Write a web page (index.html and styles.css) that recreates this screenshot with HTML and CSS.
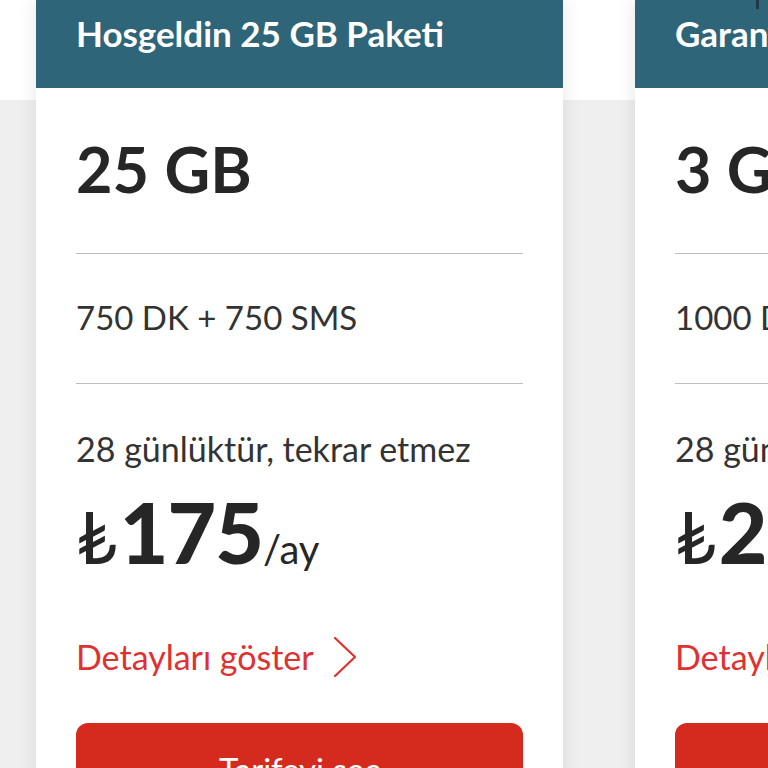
FILE: index.html
```html
<!DOCTYPE html>
<html lang="tr">
<head>
<meta charset="utf-8">
<link rel="stylesheet" href="styles.css">
</head>
<body>
<div class="page">
  <div class="band"></div>
  <div class="row">
    <div class="card">
      <div class="card-head"><span class="title">Hosgeldin 25 GB Paketi</span></div>
      <div class="card-body">
        <div class="data">25 GB</div>
        <div class="divider"></div>
        <div class="minutes">750 DK + 750 SMS</div>
        <div class="divider"></div>
        <div class="period">28 günlüktür, tekrar etmez</div>
        <div class="price"><span class="cur">₺</span><span class="amount">175</span><span class="per">/ay</span></div>
        <a class="details">Detayları göster
          <svg class="chev" viewBox="0 0 28 44" width="28" height="44"><path d="M4 3 L24 22 L4 41" fill="none" stroke="#e03131" stroke-width="2.2" stroke-linecap="round" stroke-linejoin="round"/></svg>
        </a>
        <div class="btn">Tarifeyi seç</div>
      </div>
    </div>
    <div class="card">
      <div class="card-head"><span class="title">Garanti 3 GB Paketi</span><span class="mark"></span></div>
      <div class="card-body">
        <div class="data">3 GB</div>
        <div class="divider"></div>
        <div class="minutes">1000 DK + 1000 SMS</div>
        <div class="divider"></div>
        <div class="period">28 günlüktür, tekrar etmez</div>
        <div class="price"><span class="cur">₺</span><span class="amount">200</span><span class="per">/ay</span></div>
        <a class="details">Detayları göster
          <svg class="chev" viewBox="0 0 28 44" width="28" height="44"><path d="M4 3 L24 22 L4 41" fill="none" stroke="#e03131" stroke-width="2.2" stroke-linecap="round" stroke-linejoin="round"/></svg>
        </a>
        <div class="btn">Tarifeyi seç</div>
      </div>
    </div>
  </div>
</div>
</body>
</html>
```

FILE: styles.css
```css
html, body {
  margin: 0;
  padding: 0;
}
body {
  width: 768px;
  height: 768px;
  overflow: hidden;
  background: #efefef;
  font-family: "Lato", "DejaVu Sans", sans-serif;
  color: #333;
}
.page {
  position: relative;
  width: 768px;
  height: 768px;
  overflow: hidden;
}
.band {
  position: absolute;
  left: 0;
  top: 0;
  width: 768px;
  height: 100px;
  background: #fff;
}
.row {
  position: relative;
  display: flex;
  gap: 72px;
  padding-left: 36px;
  width: max-content;
}
.card {
  width: 527px;
  flex: none;
  background: #fff;
  box-shadow: 0 0 18px rgba(0,0,0,0.10);
}
.card-head {
  position: relative;
  height: 88px;
  background: #2e6578;
  box-sizing: border-box;
  padding: 12px 40px 0;
  overflow: hidden;
}
.title {
  display: block;
  color: #fff;
  font-weight: 700;
  font-size: 35px;
  line-height: 42px;
  white-space: nowrap;
}
.mark {
  position: absolute;
  left: 121px;
  top: 0;
  width: 3px;
  height: 9px;
  background: #1f3a45;
}
.card-body {
  padding: 0 40px;
  height: 700px;
}
.data {
  font-weight: 700;
  font-size: 63px;
  line-height: 76px;
  padding-top: 43px;
  color: #262626;
  white-space: nowrap;
}
.divider {
  height: 1px;
  background: #bdbdbd;
}
.data + .divider {
  margin-top: 46px;
}
.minutes {
  font-size: 33px;
  line-height: 42px;
  margin-top: 42px;
  white-space: nowrap;
}
.minutes + .divider {
  margin-top: 45px;
}
.period {
  font-size: 34px;
  line-height: 42px;
  margin-top: 44px;
  white-space: nowrap;
}
.price {
  display: flex;
  align-items: baseline;
  margin-top: 20px;
  line-height: 84px;
  height: 84px;
  color: #262626;
  white-space: nowrap;
}
.cur {
  font-size: 72px;
  font-weight: 400;
  margin-right: 2px;
}
.amount {
  font-size: 84px;
  font-weight: 900;
  letter-spacing: -1px;
}
.per {
  font-size: 40px;
}
.details {
  display: flex;
  align-items: center;
  gap: 17px;
  margin-top: 63px;
  color: #e03131;
  font-size: 34px;
  line-height: 40px;
  height: 40px;
  white-space: nowrap;
}
.btn {
  margin-top: 46px;
  height: 64px;
  background: #d52b1e;
  border-radius: 12px;
  color: #fff;
  font-size: 33px;
  line-height: 64px;
  text-align: center;
  padding-top: 14px;
}
```
